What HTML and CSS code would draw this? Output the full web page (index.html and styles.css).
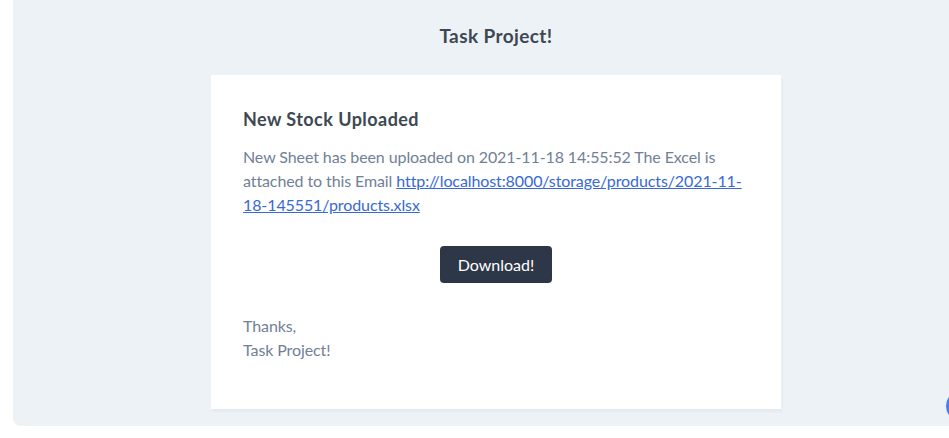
FILE: index.html
```html
<!DOCTYPE html>
<html>
<head>
<meta charset="utf-8">
<link rel="stylesheet" href="styles.css">
</head>
<body>
<div class="wrapper">
  <div class="header">Task Project!</div>
  <div class="card">
    <h1 class="title">New Stock Uploaded</h1>
    <p class="text">New Sheet has been uploaded on 2021-11-18 14:55:52 The Excel is attached to this Email <a class="link" href="#">http://localhost:8000/storage/products/2021-11-18-145551/products.xlsx</a></p>
    <div class="action"><a class="button" href="#">Download!</a></div>
    <p class="text">Thanks,<br>Task Project!</p>
  </div>
  <div class="fab"></div>
</div>
</body>
</html>
```
FILE: styles.css
```css
html, body {
  margin: 0;
  padding: 0;
  overflow: hidden;
  background: #ffffff;
}
body {
  font-family: Lato, "Noto Sans", sans-serif;
  width: 949px;
  height: 438px;
}
.wrapper {
  position: relative;
  margin-left: 13px;
  width: 966px;
  height: 426px;
  background: #edf2f7;
  border-radius: 0 0 8px 8px;
  box-sizing: border-box;
}
.header {
  text-align: center;
  font-weight: 700;
  font-size: 19px;
  letter-spacing: 0.4px;
  color: #3d4852;
  line-height: 24px;
  padding: 24px 0 27px;
}
.card {
  width: 570px;
  margin: 0 auto;
  background: #ffffff;
  box-sizing: border-box;
  padding: 32px 32px 32px;
  box-shadow: 0 2px 0 rgba(0, 0, 150, 0.025), 2px 4px 0 rgba(0, 0, 150, 0.015);
}
.title {
  margin: 0 0 14px;
  font-size: 18px;
  font-weight: 700;
  letter-spacing: 0.45px;
  line-height: 24px;
  color: #3d4852;
}
.text {
  margin: 0 0 16px;
  font-size: 16px;
  letter-spacing: -0.1px;
  line-height: 24px;
  color: #718096;
}
.text:last-child {
  margin-bottom: 15px;
}
.link {
  color: #3869d4;
  text-decoration: underline;
}
.action {
  display: flex;
  justify-content: center;
  margin: 29px 0 31px;
}
.button {
  display: inline-block;
  background: #2d3748;
  color: #ffffff;
  text-decoration: none;
  font-size: 16px;
  line-height: 21px;
  padding: 8px 18px;
  border-radius: 4px;
}
.fab {
  position: absolute;
  left: 933px;
  top: 390px;
  width: 32px;
  height: 32px;
  border-radius: 50%;
  background: #4a7cf0;
}
```
